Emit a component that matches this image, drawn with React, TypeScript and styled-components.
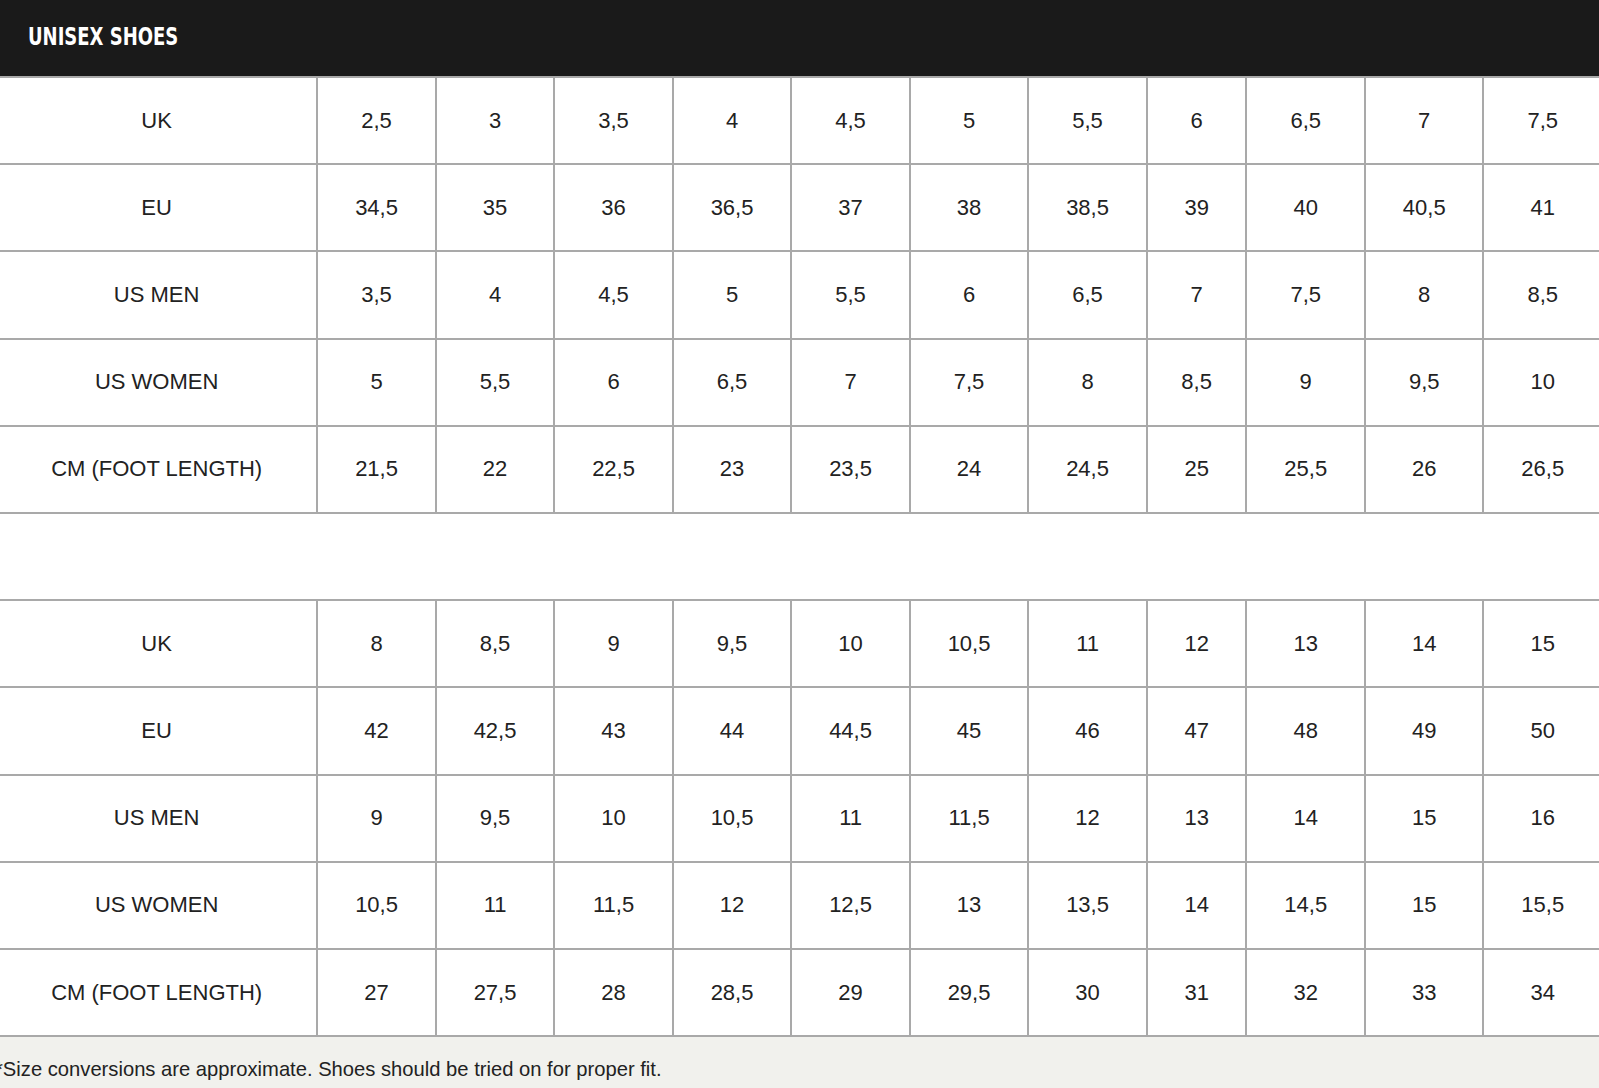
import React from 'react';
import styled, { createGlobalStyle } from 'styled-components';

const GlobalStyle = createGlobalStyle`
  html, body {
    margin: 0;
    padding: 0;
    background: #ffffff;
  }
  body {
    font-family: 'Liberation Sans', Arial, Helvetica, sans-serif;
    color: #222222;
  }
`;

const Page = styled.div`
  width: 1599px;
  height: 1088px;
  overflow: hidden;
  background: #ffffff;
  display: flex;
  flex-direction: column;
`;

const Header = styled.div`
  height: 76px;
  flex: none;
  background: #1a1a1a;
  display: flex;
  align-items: center;
  padding-left: 28px;
`;

const Title = styled.h2`
  margin: -3px 0 0;
  color: #ffffff;
  font-family: 'Liberation Sans Narrow', 'DejaVu Sans Condensed', 'Liberation Sans', sans-serif;
  font-weight: 700;
  font-size: 25px;
  line-height: 1;
  transform: scaleX(0.8);
  transform-origin: left center;
`;

const Table = styled.div`
  flex: none;
  display: grid;
  grid-template-columns: 316.3px repeat(7, 118.5px) 99.7px repeat(3, 118.5px);
  grid-auto-rows: 87.2px;
  border-top: 2px solid #a9a9a9;
`;

const Cell = styled.div<{ $label?: boolean }>`
  box-sizing: border-box;
  display: flex;
  align-items: center;
  justify-content: center;
  border-bottom: 2px solid #a9a9a9;
  border-left: ${({ $label }) => ($label ? 'none' : '2px solid #a9a9a9')};
  padding-right: ${({ $label }) => ($label ? '3px' : '0')};
  font-size: 22px;
  color: #222222;
  white-space: nowrap;
`;

const Spacer = styled.div`
  height: 85.3px;
  flex: none;
`;

const Note = styled.div`
  flex: 1;
  background: #f1f1ed;
  padding-top: 20px;
  font-size: 20.2px;
  line-height: 24px;
  color: #222222;
`;

const NoteText = styled.p`
  margin: 0 0 0 -5px;
`;

type Row = { label: string; values: string[] };

const first: Row[] = [
  { label: 'UK', values: ['2,5', '3', '3,5', '4', '4,5', '5', '5,5', '6', '6,5', '7', '7,5'] },
  { label: 'EU', values: ['34,5', '35', '36', '36,5', '37', '38', '38,5', '39', '40', '40,5', '41'] },
  { label: 'US MEN', values: ['3,5', '4', '4,5', '5', '5,5', '6', '6,5', '7', '7,5', '8', '8,5'] },
  { label: 'US WOMEN', values: ['5', '5,5', '6', '6,5', '7', '7,5', '8', '8,5', '9', '9,5', '10'] },
  { label: 'CM (FOOT LENGTH)', values: ['21,5', '22', '22,5', '23', '23,5', '24', '24,5', '25', '25,5', '26', '26,5'] },
];

const second: Row[] = [
  { label: 'UK', values: ['8', '8,5', '9', '9,5', '10', '10,5', '11', '12', '13', '14', '15'] },
  { label: 'EU', values: ['42', '42,5', '43', '44', '44,5', '45', '46', '47', '48', '49', '50'] },
  { label: 'US MEN', values: ['9', '9,5', '10', '10,5', '11', '11,5', '12', '13', '14', '15', '16'] },
  { label: 'US WOMEN', values: ['10,5', '11', '11,5', '12', '12,5', '13', '13,5', '14', '14,5', '15', '15,5'] },
  { label: 'CM (FOOT LENGTH)', values: ['27', '27,5', '28', '28,5', '29', '29,5', '30', '31', '32', '33', '34'] },
];

function SizeTable({ rows }: { rows: Row[] }) {
  return (
    <Table>
      {rows.map((row) => (
        <React.Fragment key={row.label}>
          <Cell $label>{row.label}</Cell>
          {row.values.map((v, i) => (
            <Cell key={i}>{v}</Cell>
          ))}
        </React.Fragment>
      ))}
    </Table>
  );
}

export default function App() {
  return (
    <>
      <GlobalStyle />
      <Page>
        <Header>
          <Title>UNISEX SHOES</Title>
        </Header>
        <SizeTable rows={first} />
        <Spacer />
        <SizeTable rows={second} />
        <Note>
          <NoteText>*Size conversions are approximate. Shoes should be tried on for proper fit.</NoteText>
        </Note>
      </Page>
    </>
  );
}
